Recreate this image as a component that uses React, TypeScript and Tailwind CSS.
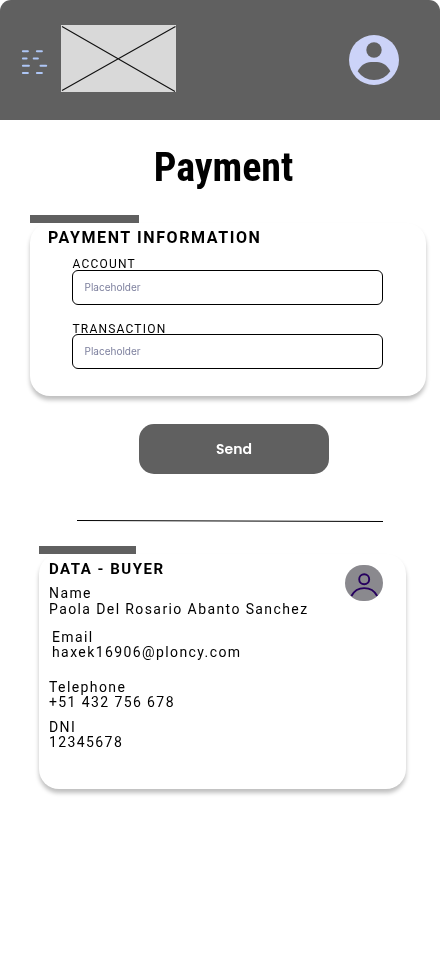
import React from "react";

function Header() {
  return (
    <header className="flex h-[120px] items-start rounded-t-[11px] bg-[#606060]">
      <svg className="mt-[48px] ml-[21px] h-[28px] w-[28px]" viewBox="21 48 28 28" fill="none" stroke="#aec6f6" strokeWidth="2" strokeLinecap="round">
        <path d="M22.9 51.2H27.9M36.9 51.2H41.9M22.9 58.5H26.6M33.7 58.5H37.9M22.9 65.8H28.9M40.5 65.8H46.2M22.9 73.1H27.9M36.9 73.1H41.9" />
      </svg>
      <svg className="mt-[25px] ml-[12px] h-[67px] w-[115px] bg-[#d9d9d9]" viewBox="0 0 115 67" fill="none" stroke="#111" strokeWidth="1.1">
        <path d="M1 1.5L114 66.5M114.5 1.5L1 65.5" />
      </svg>
      <svg className="mt-[35px] ml-[173px] h-[50px] w-[50px]" viewBox="0 0 50 50">
        <circle cx="25" cy="25" r="25" fill="#ccd3f8" />
        <circle cx="25" cy="15" r="7.7" fill="#606060" />
        <path d="M8.7 36.3C11.5 30.5 16.5 27 22 27H28C33.5 27 38.5 30.5 41.3 36.3A19.6 19.6 0 0 1 8.7 36.3Z" fill="#606060" />
      </svg>
    </header>
  );
}

function Field({ label, className }: { label: string; className: string }) {
  return (
    <label className={`block ${className}`}>
      <span className="ml-[0.5px] block text-[12px] leading-[12px] tracking-[1.2px] whitespace-nowrap">{label}</span>
      <span className="flex h-[35px] w-[311px] items-center rounded-[6px] border border-black bg-white pl-[11.5px] font-[Inter,sans-serif] text-[10px] text-[#7c7f9d]">
        Placeholder
      </span>
    </label>
  );
}

export default function App() {
  return (
    <div className="h-[956px] w-[440px] overflow-hidden bg-white font-[Roboto,sans-serif] text-black will-change-transform">
      <Header />
      <h1 className="mt-[24px] ml-[7px] text-center text-[40px] leading-[48px] font-bold [font-stretch:75%]">Payment</h1>

      <section className="mt-[23px] ml-[30px] w-[396px]">
        <div className="h-[8px] w-[109px] bg-[#606060]" />
        <div className="h-[173px] rounded-[20px] bg-white pt-[7px] pl-[18px] shadow-[0_4px_4px_rgba(0,0,0,0.25)]">
          <h2 className="text-[16px] leading-[16px] font-bold tracking-[1.6px] whitespace-nowrap">PAYMENT INFORMATION</h2>
          <Field label="ACCOUNT" className="mt-[12px] ml-[24px]" />
          <Field label="TRANSACTION" className="mt-[18px] ml-[24px] [&>span:first-child]:-mb-px" />
        </div>
      </section>

      <button className="mt-[28px] ml-[139px] block h-[50px] w-[190px] rounded-[15px] bg-[#606060] font-[Poppins,Inter,sans-serif] text-[14px] font-semibold text-white">
        Send
      </button>

      <svg className="mt-[44px] ml-[77px] block h-[6px] w-[306px]" viewBox="0 0 306 6">
        <path d="M0 2.5L306 3.5" stroke="black" />
      </svg>

      <section className="mt-[22px] ml-[39px] w-[367px]">
        <div className="h-[8px] w-[97px] bg-[#606060]" />
        <div className="flex h-[235px] justify-between rounded-[20px] bg-white pt-[7px] pr-[23px] pl-[10px] shadow-[0_4px_4px_rgba(0,0,0,0.25)]">
          <div className="text-[14px] leading-[14px] tracking-[1.4px] whitespace-nowrap">
            <h2 className="text-[15px] leading-[16px] font-bold tracking-[1.5px]">DATA - BUYER</h2>
            <div className="mt-[8px] leading-[16px]">
              <p>Name</p>
              <p>Paola Del Rosario Abanto Sanchez</p>
            </div>
            <div className="mt-[13px] ml-[3px]">
              <p>Email</p>
              <p className="mt-px">haxek16906@ploncy.com</p>
            </div>
            <div className="mt-[21px]">
              <p>Telephone</p>
              <p className="mt-px">+51 432 756 678</p>
            </div>
            <div className="mt-[11px]">
              <p>DNI</p>
              <p className="mt-px">12345678</p>
            </div>
          </div>
          <svg className="mt-[4px] h-[36px] w-[38px] rounded-[18px] bg-[#8a898e]" viewBox="0 0 38 36" fill="none" stroke="#26005f" strokeWidth="1.9">
            <circle cx="19.2" cy="14.3" r="5" />
            <path d="M6.4 31C9 26 13.5 23.1 19.2 23.1S29.6 26 32.2 31" />
          </svg>
        </div>
      </section>
    </div>
  );
}
